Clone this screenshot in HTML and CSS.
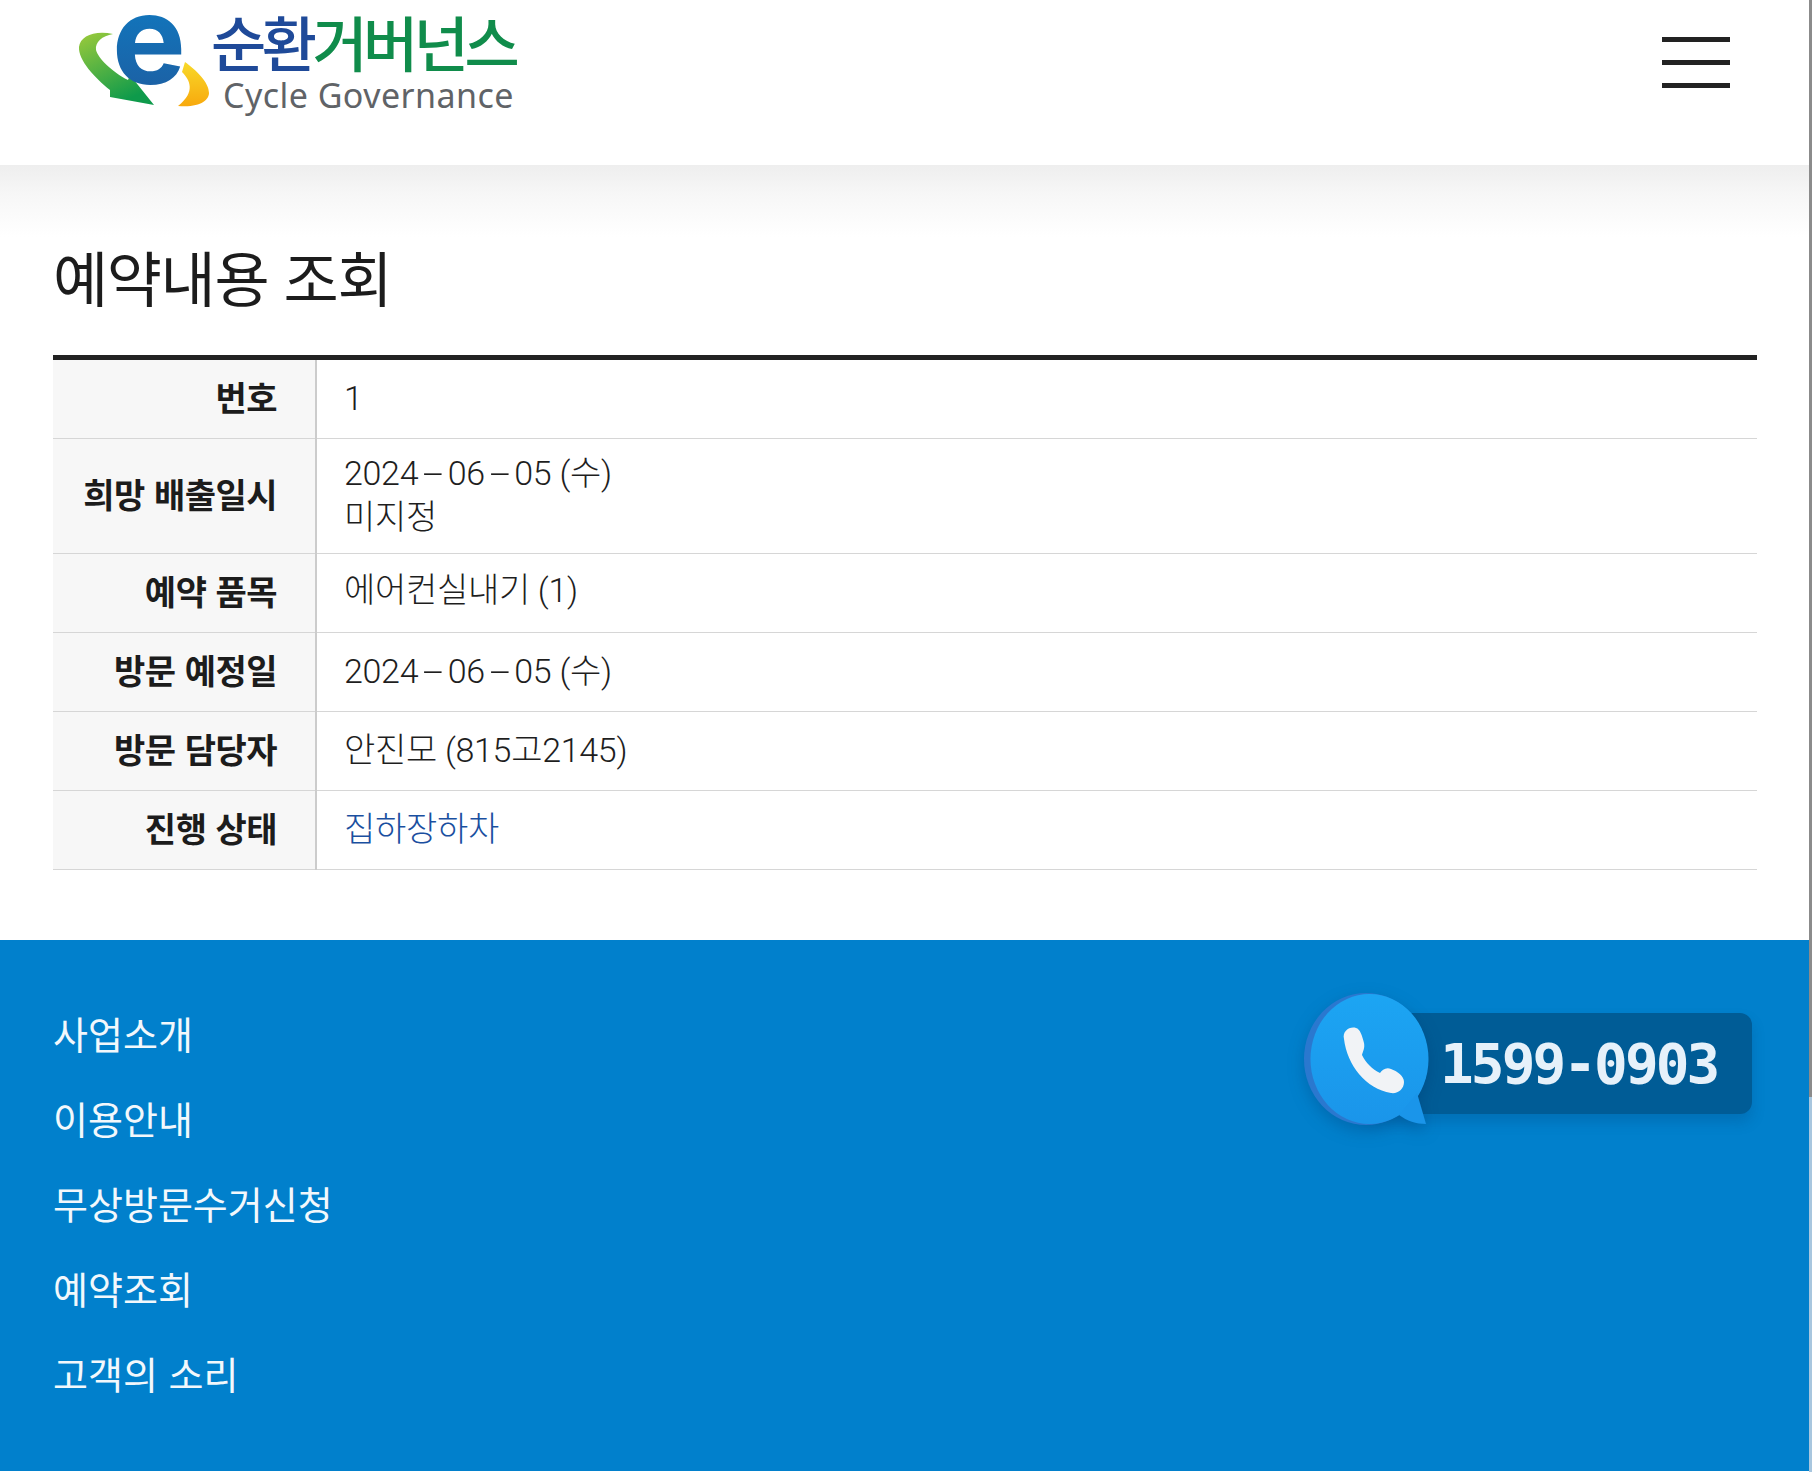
FILE: index.html
```html
<!DOCTYPE html>
<html lang="ko">

<head>
    <meta charset="UTF-8">
    <meta name="viewport" content="width=device-width, initial-scale=1.0">
    <title>예약내용 조회</title>
    <link rel="stylesheet" href="styles.css">
</head>

<body>
    <div class="page">
        <header class="site-header">
            <a class="logo" href="#">
                <svg class="logo-mark" viewBox="70 10 140 100" width="140" height="100">
                    <defs>
                        <linearGradient id="greenArrow" x1="0" y1="0" x2="0.5" y2="1">
                            <stop offset="0" stop-color="#9ccb3b"/>
                            <stop offset="1" stop-color="#0e9a4b"/>
                        </linearGradient>
                        <linearGradient id="yellowArc" x1="0" y1="0" x2="0" y2="1">
                            <stop offset="0" stop-color="#f8d92a"/>
                            <stop offset="1" stop-color="#f8a90d"/>
                        </linearGradient>
                        <linearGradient id="blueE" x1="0" y1="0" x2="0" y2="1">
                            <stop offset="0" stop-color="#0c80c8"/>
                            <stop offset="1" stop-color="#1f5b9e"/>
                        </linearGradient>
                    </defs>
                    <path d="M113 34C95 30 80 36 79 47C78 60 95 78 110 90L110 97L154 105L130 75L128 80C112 72 98 58 96 50C95 42 102 36 113 34Z" fill="url(#greenArrow)"/>
                    <path d="M185 62L182 72C190 80 196 92 178 106C200 108 209 100 209 93C209 82 196 70 185 62Z" fill="url(#yellowArc)"/>
                    <text class="logo-e" x="112" y="84" fill="url(#blueE)">e</text>
                </svg>
                <div class="logo-text">
                    <div class="logo-ko"><span class="logo-blue">순환</span><span class="logo-green">거버넌스</span></div>
                    <div class="logo-en">Cycle Governance</div>
                </div>
            </a>
            <button class="menu-btn" aria-label="메뉴">
                <span></span>
                <span></span>
                <span></span>
            </button>
        </header>

        <main class="content">
            <h1 class="page-title">예약내용 조회</h1>
            <table class="detail-table">
                <tr>
                    <th>번호</th>
                    <td>1</td>
                </tr>
                <tr>
                    <th>희망 배출일시</th>
                    <td>2024<span class="dash">-</span>06<span class="dash">-</span>05 (수)<br>미지정</td>
                </tr>
                <tr class="row-items">
                    <th>예약 품목</th>
                    <td>에어컨실내기 (1)</td>
                </tr>
                <tr>
                    <th>방문 예정일</th>
                    <td>2024<span class="dash">-</span>06<span class="dash">-</span>05 (수)</td>
                </tr>
                <tr>
                    <th>방문 담당자</th>
                    <td>안진모 (815고2145)</td>
                </tr>
                <tr>
                    <th>진행 상태</th>
                    <td class="status">집하장하차</td>
                </tr>
            </table>
        </main>

        <footer class="site-footer">
            <nav class="footer-nav">
                <a href="#">사업소개</a>
                <a href="#">이용안내</a>
                <a href="#">무상방문수거신청</a>
                <a href="#">예약조회</a>
                <a href="#">고객의 소리</a>
            </nav>
            <div class="call-box">
                <svg class="call-bubble" viewBox="0 0 126 134" width="126" height="134">
                    <defs>
                        <linearGradient id="bubbleFill" x1="0" y1="0" x2="0" y2="1">
                            <stop offset="0" stop-color="#1ca5f3"/>
                            <stop offset="1" stop-color="#1a95ea"/>
                        </linearGradient>
                    </defs>
                    <ellipse cx="62" cy="66" rx="62" ry="66" fill="#2a78cf"/>
                    <ellipse cx="65.5" cy="66" rx="59" ry="65" fill="url(#bubbleFill)"/>
                    <path d="M113 100L122 131C112 131 103 128 95 122Z" fill="#1a95ea"/>
                    <path d="M40 46C38 38 46 33 52 35C56 36 58 42 60 50C61 55 59 58 58 62C62 70 68 76 76 80C78 77 82 74 87 76C93 78 100 83 100 89C100 96 94 101 87 100C62 96 43 72 40 46Z" fill="#f1f3f6"/>
                </svg>
                <div class="call-bar">1599-0903</div>
            </div>
        </footer>
    </div>
    <div class="scrollbar"><div class="scrollbar-thumb"></div></div>
</body>

</html>
```

FILE: styles.css
```css
html {
    overflow: hidden;
}

body {
    display: flex;
    margin: 0;
    height: 1472px;
    background-color: #fff;
    color: #222;
    font-family: "Noto Sans CJK KR", "Noto Sans", sans-serif;
}

a {
    text-decoration: none;
    color: inherit;
}

.page {
    flex: 1;
    min-width: 0;
}

.scrollbar {
    flex: none;
    width: 3px;
    background-color: #a8c6de;
}

.scrollbar-thumb {
    height: 1097px;
    background-color: #8b8b8b;
}

.site-header {
    display: flex;
    justify-content: space-between;
    height: 165px;
    padding: 0 79px 0 70px;
    box-sizing: border-box;
}

.logo {
    display: flex;
    align-items: flex-start;
    padding-top: 10px;
    height: 100px;
}

.logo-mark {
    overflow: visible;
}

.logo-e {
    font-family: Inter, "Liberation Sans", sans-serif;
    font-weight: 700;
    font-size: 124px;
}

.logo-text {
    margin-left: 1px;
}

.logo-ko {
    font-size: 60px;
    font-weight: 500;
    line-height: 62px;
    letter-spacing: -4.5px;
    white-space: nowrap;
}

.logo-blue {
    color: #1f4a99;
}

.logo-green {
    color: #108c4b;
}

.logo-en {
    margin: 4px 0 0 12px;
    color: #606367;
    font-family: "Noto Sans", sans-serif;
    font-size: 34px;
    line-height: 38px;
    letter-spacing: 0.45px;
    white-space: nowrap;
}

.menu-btn {
    display: flex;
    flex-direction: column;
    gap: 18px;
    padding: 37px 0 0;
    border: none;
    background: none;
    width: 68px;
}

.menu-btn span {
    display: block;
    height: 5px;
    background-color: #222;
}

.content {
    height: 775px;
    padding: 0 52px 0 53px;
    background: linear-gradient(#eeeeee, #f7f7f7 30px, #ffffff 72px) no-repeat;
}

.page-title {
    margin: 0;
    padding-top: 73px;
    height: 117px;
    font-size: 60px;
    font-weight: 400;
    line-height: 76px;
    letter-spacing: -1.4px;
    color: #1c1c1c;
}

.detail-table {
    width: 100%;
    border-collapse: collapse;
    border-top: 5px solid #222;
    font-family: Roboto, "Noto Sans CJK KR", sans-serif;
    font-size: 34px;
    line-height: 44px;
}

.detail-table th {
    width: 224px;
    height: 74px;
    padding: 0 38px 4px 0;
    background-color: #f7f7f7;
    border-bottom: 1px solid #d6d6d6;
    border-right: 2px solid #cccccc;
    text-align: right;
    font-family: "Noto Sans CJK KR", sans-serif;
    font-weight: 700;
    font-size: 34px;
    letter-spacing: -0.5px;
    color: #1c1c1c;
}

.detail-table td {
    padding: 12px 27px 14px;
    border-bottom: 1px solid #d6d6d6;
    color: #1e1e1e;
    font-weight: 300;
    letter-spacing: -0.3px;
}

.dash {
    display: inline-block;
    margin: 0 10px;
    transform: scaleX(2.2);
}

.row-items td {
    padding-bottom: 19px;
}

.detail-table .status {
    color: #1a4fa0;
}

.site-footer {
    display: flex;
    justify-content: space-between;
    height: 531px;
    padding: 50px 57px 0 53px;
    box-sizing: border-box;
    background-color: #0180cc;
}

.footer-nav {
    display: flex;
    flex-direction: column;
}

.footer-nav a {
    color: #f2f8fc;
    font-size: 38px;
    line-height: 85px;
}

.call-box {
    position: relative;
    width: 448px;
    height: 132px;
    margin-top: 3px;
}

.call-bubble {
    position: absolute;
    top: 0;
    left: 0;
    filter: drop-shadow(0 6px 8px rgba(0, 40, 90, 0.25));
}

.call-bar {
    margin: 20px 0 0 60px;
    height: 101px;
    box-sizing: border-box;
    padding-left: 76px;
    background-color: #005c96;
    border-radius: 12px;
    box-shadow: 0 8px 14px rgba(0, 50, 100, 0.2);
    color: #e6f1fa;
    font-family: "DejaVu Sans Mono", monospace;
    font-weight: 700;
    font-size: 56px;
    line-height: 101px;
    letter-spacing: -2.9px;
}
```
